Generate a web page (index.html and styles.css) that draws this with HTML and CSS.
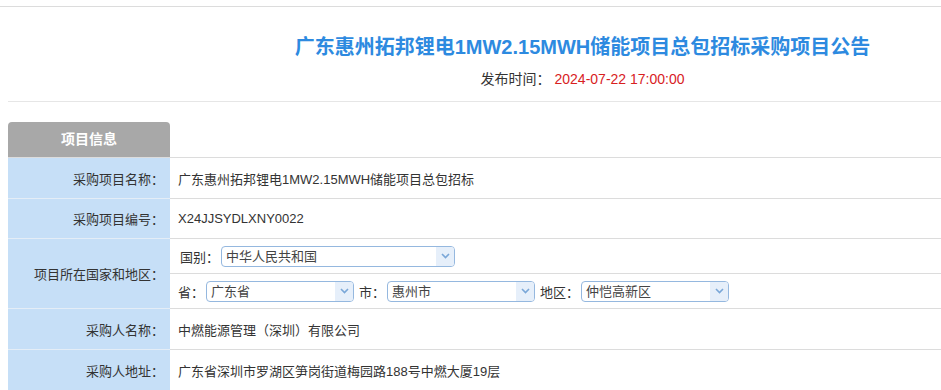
FILE: index.html
```html
<!DOCTYPE html>
<html lang="zh">
<head>
    <meta charset="UTF-8">
    <meta name="viewport" content="width=device-width, initial-scale=1.0">
    <title>广东惠州拓邦锂电1MW2.15MWH储能项目总包招标采购项目公告</title>
    <link rel="stylesheet" href="styles.css">
</head>
<body>
    <div class="top-line"></div>

    <div class="notice-head">
        <h1 class="notice-title">广东惠州拓邦锂电1MW2.15MWH储能项目总包招标采购项目公告</h1>
        <p class="notice-time">发布时间：<span class="time-value">2024-07-22 17:00:00</span></p>
    </div>

    <div class="section">
        <div class="section-tab">项目信息</div>

        <div class="info-table">
            <div class="info-label">采购项目名称：</div>
            <div class="info-value">广东惠州拓邦锂电1MW2.15MWH储能项目总包招标</div>

            <div class="info-label row-short">采购项目编号：</div>
            <div class="info-value row-short">X24JJSYDLXNY0022</div>

            <div class="info-label row-tall">项目所在国家和地区：</div>
            <div class="info-value region">
                <div class="region-line">
                    <span class="field-label first">国别：</span>
                    <span class="combo combo-wide">
                        <span class="combo-text">中华人民共和国</span>
                        <span class="combo-arrow"><svg width="9" height="6" viewBox="0 0 9 6"><path d="M1 1l3.5 3.5L8 1" fill="none" stroke="#7aa7d8" stroke-width="1.6"/></svg></span>
                    </span>
                </div>
                <div class="region-line">
                    <span class="field-label">省：</span>
                    <span class="combo">
                        <span class="combo-text">广东省</span>
                        <span class="combo-arrow"><svg width="9" height="6" viewBox="0 0 9 6"><path d="M1 1l3.5 3.5L8 1" fill="none" stroke="#7aa7d8" stroke-width="1.6"/></svg></span>
                    </span>
                    <span class="field-label">市：</span>
                    <span class="combo">
                        <span class="combo-text">惠州市</span>
                        <span class="combo-arrow"><svg width="9" height="6" viewBox="0 0 9 6"><path d="M1 1l3.5 3.5L8 1" fill="none" stroke="#7aa7d8" stroke-width="1.6"/></svg></span>
                    </span>
                    <span class="field-label">地区：</span>
                    <span class="combo">
                        <span class="combo-text">仲恺高新区</span>
                        <span class="combo-arrow"><svg width="9" height="6" viewBox="0 0 9 6"><path d="M1 1l3.5 3.5L8 1" fill="none" stroke="#7aa7d8" stroke-width="1.6"/></svg></span>
                    </span>
                </div>
            </div>

            <div class="info-label">采购人名称：</div>
            <div class="info-value">中燃能源管理（深圳）有限公司</div>

            <div class="info-label">采购人地址：</div>
            <div class="info-value">广东省深圳市罗湖区笋岗街道梅园路188号中燃大厦19层</div>
        </div>
    </div>
</body>
</html>
```

FILE: styles.css
```css
body {
    margin: 0;
    font-family: "Liberation Sans", "Noto Sans CJK SC", sans-serif;
    font-size: 13px;
    color: #333;
    background-color: #fff;
}

.top-line {
    height: 6px;
    border-bottom: 1px solid #dcdcdc;
}

/* 公告标题 */
.notice-head {
    margin-left: 8px;
    padding: 28px 0 12px 216px;
    border-bottom: 1px solid #e6e6e6;
    text-align: center;
}

.notice-title {
    margin: 0;
    font-size: 20px;
    line-height: 24px;
    font-weight: bold;
    color: #2d8ae0;
}

.notice-time {
    margin: 10px 0 0;
    font-size: 14px;
    line-height: 20px;
    color: #333;
}

.time-value {
    margin-left: 4px;
    color: #d8211f;
}

/* 项目信息 */
.section {
    margin: 20px 0 0 8px;
}

.section-tab {
    width: 162px;
    height: 35px;
    line-height: 35px;
    background-color: #a8a8a8;
    border-radius: 4px 4px 0 0;
    color: #fff;
    font-size: 14px;
    font-weight: bold;
    text-align: center;
}

.info-table {
    display: grid;
    grid-template-columns: 162px 1fr;
    border-top: 1px solid #dcdcdc;
}

.info-label,
.info-value {
    height: 40px;
    display: flex;
    align-items: center;
    border-bottom: 1px solid #dcdcdc;
}

.info-label {
    justify-content: flex-end;
    padding-right: 6px;
    background-color: #c6dff7;
    border-bottom-color: #e4edf6;
}

.info-value {
    padding-left: 8px;
}

.row-short {
    height: 39px;
}

.row-tall {
    height: 69px;
}

.region {
    height: auto;
    flex-direction: column;
    align-items: stretch;
    padding-left: 0;
}

.region-line {
    height: 34px;
    display: flex;
    align-items: center;
    padding-left: 8px;
}

.region-line + .region-line {
    border-top: 1px solid #dcdcdc;
}

.field-label {
    margin: 0 2px 0 5px;
}

.field-label:first-child {
    margin-left: 0;
}

.field-label.first {
    margin-left: 2px;
}

/* 下拉框 */
.combo {
    width: 146px;
    height: 19px;
    display: flex;
    align-items: stretch;
    border: 1px solid #95b8df;
    border-radius: 4px;
    overflow: hidden;
    background-color: #fff;
}

.combo-wide {
    width: 232px;
}

.combo-text {
    flex: 1;
    padding-left: 4px;
    line-height: 19px;
    color: #444;
}

.combo-arrow {
    width: 18px;
    display: flex;
    align-items: center;
    justify-content: center;
    background-color: #e6effa;
}
```
